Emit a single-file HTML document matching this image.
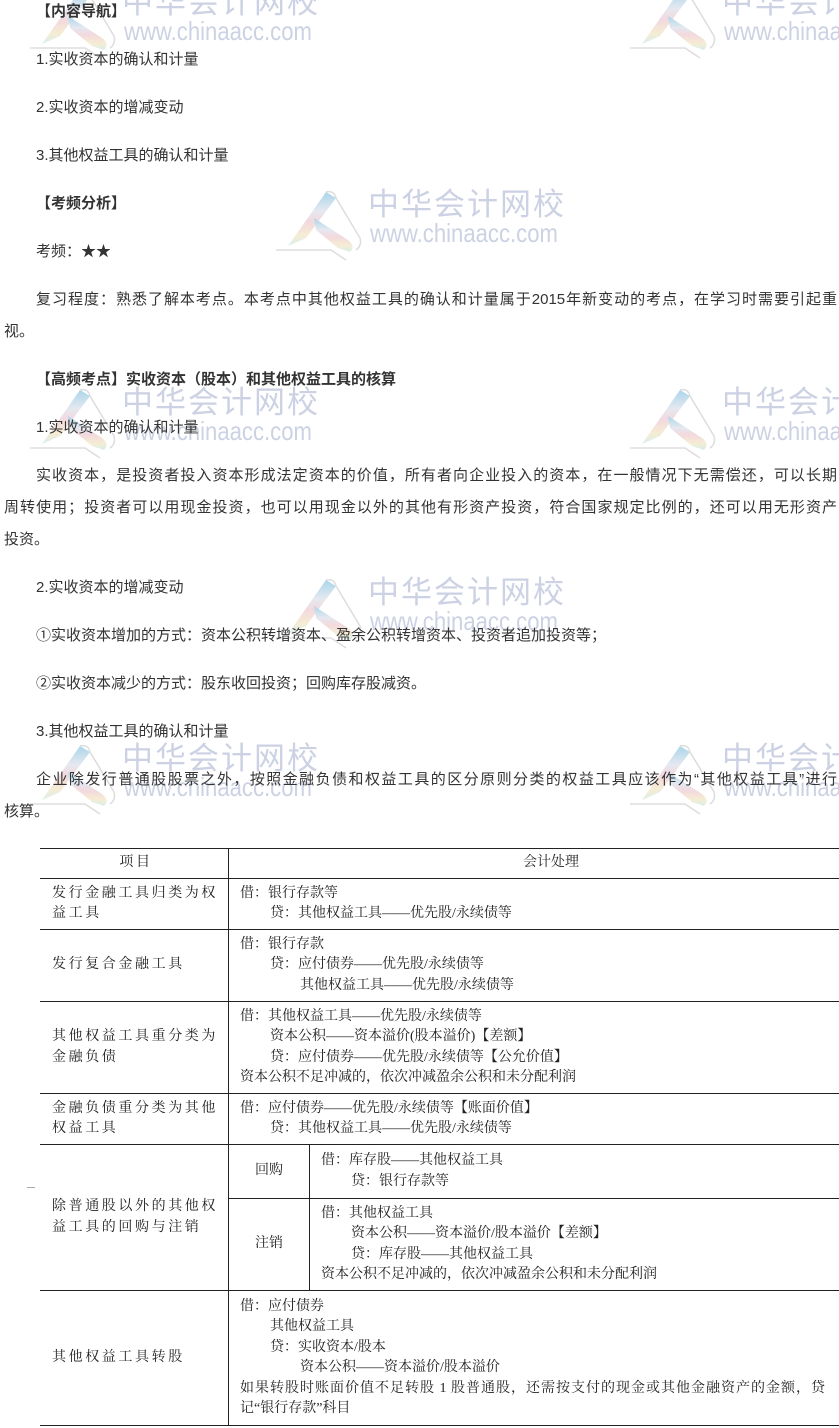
<!DOCTYPE html>
<html><head><meta charset="utf-8"><style>
body{margin:0;width:839px;height:1428px;background:#fff;position:relative;overflow:hidden;font-family:"Liberation Sans","Noto Sans CJK SC",sans-serif;color:#333;}
.p{position:absolute;left:4px;width:833px;box-sizing:border-box;font-size:15px;line-height:32px;white-space:nowrap;z-index:2}
.in{padding-left:32px}
.j{text-align:justify;text-align-last:justify;white-space:normal}
b{font-weight:bold;color:#333}
.wm{position:absolute;width:300px;height:70px;pointer-events:none;z-index:1}
.wm .c{position:absolute;left:92px;top:0;font-size:31px;line-height:34px;color:#ccd2e3;letter-spacing:2px;white-space:nowrap}
.wm .u{position:absolute;left:94px;top:30px;font-size:26px;line-height:30px;color:#ccd2e3;white-space:nowrap;transform:scaleX(.85);transform-origin:left}
.wm svg{position:absolute;left:0;top:0}
table{position:absolute;left:40px;top:848px;border-collapse:collapse;font-family:"Liberation Serif","Noto Serif CJK SC",serif;font-size:14px;color:#222;width:830px;z-index:2;background:transparent}
td{border-top:1px solid #222;border-bottom:1px solid #222;padding:0 8px 0 11px;line-height:20.5px;vertical-align:middle}
td.l{border-right:1px solid #222;width:168px;letter-spacing:2.6px;padding-left:12px}
td.s{border-right:1px solid #222;width:80px;text-align:center;padding:0}
.i1{padding-left:30px}.i2{padding-left:60px}
.jl{text-align:justify;text-align-last:justify;width:585px}
</style></head><body>

<div class="p in" style="top:-4px"><b>【内容导航】</b></div>
<div class="p in" style="top:44px">1.实收资本的确认和计量</div>
<div class="p in" style="top:92px">2.实收资本的增减变动</div>
<div class="p in" style="top:140px">3.其他权益工具的确认和计量</div>
<div class="p in" style="top:188px"><b>【考频分析】</b></div>
<div class="p in" style="top:236px">考频：★★</div>
<div class="p in j" style="top:284px">复习程度：熟悉了解本考点。本考点中其他权益工具的确认和计量属于2015年新变动的考点，在学习时需要引起重</div>
<div class="p" style="top:316px">视。</div>
<div class="p in" style="top:364px"><b>【高频考点】实收资本（股本）和其他权益工具的核算</b></div>
<div class="p in" style="top:412px">1.实收资本的确认和计量</div>
<div class="p in j" style="top:460px">实收资本，是投资者投入资本形成法定资本的价值，所有者向企业投入的资本，在一般情况下无需偿还，可以长期</div>
<div class="p j" style="top:492px">周转使用；投资者可以用现金投资，也可以用现金以外的其他有形资产投资，符合国家规定比例的，还可以用无形资产</div>
<div class="p" style="top:524px">投资。</div>
<div class="p in" style="top:572px">2.实收资本的增减变动</div>
<div class="p in" style="top:620px">①实收资本增加的方式：资本公积转增资本、盈余公积转增资本、投资者追加投资等；</div>
<div class="p in" style="top:668px">②实收资本减少的方式：股东收回投资；回购库存股减资。</div>
<div class="p in" style="top:716px">3.其他权益工具的确认和计量</div>
<div class="p in j" style="top:764px">企业除发行普通股股票之外，按照金融负债和权益工具的区分原则分类的权益工具应该作为“其他权益工具”进行</div>
<div class="p" style="top:796px">核算。</div>

<table>
<tr style="height:30px"><td class="l" style="text-align:center">项目</td><td colspan="2" style="text-align:center">会计处理</td></tr>
<tr style="height:51px"><td class="l">发行金融工具归类为权益工具</td><td colspan="2">借：银行存款等<div class="i1">贷：其他权益工具——优先股/永续债等</div></td></tr>
<tr style="height:72px"><td class="l">发行复合金融工具</td><td colspan="2">借：银行存款<div class="i1">贷：应付债券——优先股/永续债等</div><div class="i2">其他权益工具——优先股/永续债等</div></td></tr>
<tr style="height:92px"><td class="l">其他权益工具重分类为金融负债</td><td colspan="2">借：其他权益工具——优先股/永续债等<div class="i1">资本公积——资本溢价(股本溢价)【差额】</div><div class="i1">贷：应付债券——优先股/永续债等【公允价值】</div>资本公积不足冲减的，依次冲减盈余公积和未分配利润</td></tr>
<tr style="height:51px"><td class="l">金融负债重分类为其他权益工具</td><td colspan="2">借：应付债券——优先股/永续债等【账面价值】<div class="i1">贷：其他权益工具——优先股/永续债等</div></td></tr>
<tr style="height:54px"><td class="l" rowspan="2">除普通股以外的其他权益工具的回购与注销</td><td class="s">回购</td><td>借：库存股——其他权益工具<div class="i1">贷：银行存款等</div></td></tr>
<tr style="height:92px"><td class="s">注销</td><td>借：其他权益工具<div class="i1">资本公积——资本溢价/股本溢价【差额】</div><div class="i1">贷：库存股——其他权益工具</div>资本公积不足冲减的，依次冲减盈余公积和未分配利润</td></tr>
<tr style="height:135px"><td class="l">其他权益工具转股</td><td colspan="2">借：应付债券<div class="i1">其他权益工具</div><div class="i1">贷：实收资本/股本</div><div class="i2">资本公积——资本溢价/股本溢价</div><div class="jl">如果转股时账面价值不足转股 1 股普通股，还需按支付的现金或其他金融资产的金额，贷</div>记“银行存款”科目</td></tr>
</table>
<div style="position:absolute;left:27px;top:1187px;width:8px;height:1px;background:#aaa"></div>

<svg width="0" height="0" style="position:absolute"><defs>
<linearGradient id="g" x1="0" y1="0" x2="0" y2="1"><stop offset="0" stop-color="#a9d6ea"/><stop offset=".35" stop-color="#e6e8f0"/><stop offset=".55" stop-color="#f2d9de"/><stop offset=".8" stop-color="#f6ecd4"/><stop offset="1" stop-color="#d8efe8"/></linearGradient>
<g id="lg"><path d="M12 58 L50 4 L60 10 L30 50 Z" fill="url(#g)"/><path d="M38 30 L72 52 Q80 58 74 64 L62 60 L40 42 Z" fill="url(#g)"/><path d="M0 62 L55 62 L70 72" stroke="#ddd" stroke-width="1.5" fill="none"/><path d="M50 4 Q58 2 60 10 M60 10 L84 50 Q86 58 80 62" stroke="#ddd" stroke-width="1.5" fill="none"/></g>
</defs></svg>

<div class="wm" style="left:30px;top:-14px"><svg width="90" height="76"><use href="#lg"/></svg><div class="c">中华会计网校</div><div class="u">www.chinaacc.com</div></div>
<div class="wm" style="left:630px;top:-14px"><svg width="90" height="76"><use href="#lg"/></svg><div class="c">中华会计网校</div><div class="u">www.chinaacc.com</div></div>
<div class="wm" style="left:276px;top:188px"><svg width="90" height="76"><use href="#lg"/></svg><div class="c">中华会计网校</div><div class="u">www.chinaacc.com</div></div>
<div class="wm" style="left:30px;top:386px"><svg width="90" height="76"><use href="#lg"/></svg><div class="c">中华会计网校</div><div class="u">www.chinaacc.com</div></div>
<div class="wm" style="left:630px;top:386px"><svg width="90" height="76"><use href="#lg"/></svg><div class="c">中华会计网校</div><div class="u">www.chinaacc.com</div></div>
<div class="wm" style="left:276px;top:576px"><svg width="90" height="76"><use href="#lg"/></svg><div class="c">中华会计网校</div><div class="u">www.chinaacc.com</div></div>
<div class="wm" style="left:30px;top:742px"><svg width="90" height="76"><use href="#lg"/></svg><div class="c">中华会计网校</div><div class="u">www.chinaacc.com</div></div>
<div class="wm" style="left:630px;top:742px"><svg width="90" height="76"><use href="#lg"/></svg><div class="c">中华会计网校</div><div class="u">www.chinaacc.com</div></div>
</body></html>
